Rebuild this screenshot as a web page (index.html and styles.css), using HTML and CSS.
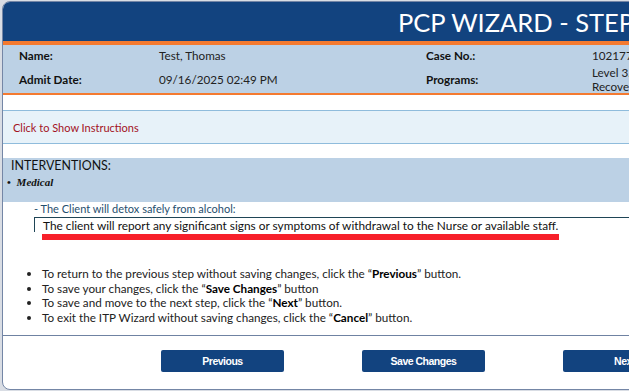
FILE: index.html
```html
<!DOCTYPE html>
<html lang="en">
<head>
    <meta charset="UTF-8">
    <title>PCP Wizard</title>
    <link rel="stylesheet" href="styles.css">
</head>
<body>
<div class="wizard">
    <div class="wizard-title">PCP WIZARD - STEP 4 OF 6</div>

    <div class="client-info">
        <div class="lbl">Name:</div>
        <div class="val">Test, Thomas</div>
        <div class="lbl">Case No.:</div>
        <div class="val">1021777</div>
        <div class="lbl row2">Admit Date:</div>
        <div class="val row2">09/16/2025 02:49 PM</div>
        <div class="lbl row2">Programs:</div>
        <div class="val multi">Level 3.7 Medically Monitored<br>Recovery Services</div>
    </div>

    <div class="instructions">Click to Show Instructions</div>

    <div class="interventions">
        <div class="section-head">INTERVENTIONS:</div>
        <div class="category"><span class="dot">&bull;</span> Medical</div>
    </div>

    <div class="goal">- The Client will detox safely from alcohol:</div>
    <div class="goal-box">
        <div class="goal-text">The client will report any significant signs or symptoms of withdrawal to the Nurse or available staff.</div>
    </div>
    <div class="mark"></div>

    <ul class="help">
        <li>To return to the previous step without saving changes, click the &ldquo;<b>Previous</b>&rdquo; button.</li>
        <li>To save your changes, click the &ldquo;<b>Save Changes</b>&rdquo; button</li>
        <li>To save and move to the next step, click the &ldquo;<b>Next</b>&rdquo; button.</li>
        <li>To exit the ITP Wizard without saving changes, click the &ldquo;<b>Cancel</b>&rdquo; button.</li>
    </ul>

    <div class="buttons">
        <button>Previous</button>
        <button>Save Changes</button>
        <button>Next</button>
        <button>Cancel</button>
    </div>
</div>
</body>
</html>
```

FILE: styles.css
```css
html, body {
    margin: 0;
    overflow: hidden;
    background-color: #d9dde4;
}
body {
    padding: 1px 0 0 2px;
    font-family: Lato, "Open Sans", sans-serif;
}
.wizard {
    width: 1000px;
    height: 389px;
    background-color: #fff;
    border: 1px solid #7486a6;
    border-radius: 8px;
    overflow: hidden;
    box-sizing: border-box;
}
.wizard-title {
    height: 39px;
    background-color: #12437f;
    color: #fff;
    font-size: 25.5px;
    line-height: 40px;
    padding-left: 395px;
    white-space: nowrap;
    border-bottom: 4px solid #f47a30;
}
.client-info {
    background-color: #bcd1e5;
    border-bottom: 2px solid #f47a30;
    display: grid;
    grid-template-columns: 140px 267px 166px 1fr;
    padding: 3px 0 0 16px;
    height: 45px;
    font-size: 11.7px;
    line-height: 14px;
    color: #222;
}
.lbl {
    font-weight: bold;
    color: #111;
}
.row2 {
    margin-top: 10px;
}
.multi {
    margin-top: 3px;
}
.instructions {
    margin-top: 15px;
    height: 32px;
    line-height: 34px;
    background-color: #e7f2f9;
    border-top: 1px solid #8fbcdc;
    border-bottom: 1px solid #8fbcdc;
    color: #a3121e;
    font-size: 11px;
    padding-left: 10px;
}
.interventions {
    margin-top: 14px;
    height: 44px;
    background-color: #bcd1e5;
    padding-left: 8px;
}
.section-head {
    font-size: 12.4px;
    line-height: 16px;
    color: #111;
}
.category {
    font-family: "Liberation Serif", serif;
    font-style: italic;
    font-weight: bold;
    font-size: 11px;
    line-height: 16px;
    color: #111;
    margin-left: -4px;
}
.dot {
    font-style: normal;
    margin-right: 3px;
}
.goal {
    margin: 0 0 0 31px;
    font-size: 11px;
    line-height: 13px;
    color: #1f4e6e;
}
.goal-box {
    margin: 2px 0 0 31px;
    border-top: 1px solid #1f4556;
    border-left: 1px solid #1f4556;
    height: 14px;
}
.goal-text {
    padding-left: 8px;
    font-size: 11.85px;
    line-height: 15px;
    color: #111;
}
.mark {
    margin: 2px 0 0 39px;
    width: 517px;
    height: 6px;
    background-color: #f7202a;
}
.help {
    margin: 26px 0 0 0;
    padding: 0 0 11px 39px;
    font-size: 11.7px;
    line-height: 14.5px;
    color: #222;
    border-bottom: 1px solid #6f82a2;
}
.help b {
    color: #000;
}
.buttons {
    display: flex;
    gap: 78px;
    padding: 14px 0 0 158px;
}
button {
    width: 123px;
    height: 22px;
    background-color: #12437f;
    color: #fff;
    border: none;
    border-radius: 2px;
    font-family: "Liberation Sans", sans-serif;
    font-weight: bold;
    font-size: 10.5px;
    letter-spacing: -0.5px;
}
```
